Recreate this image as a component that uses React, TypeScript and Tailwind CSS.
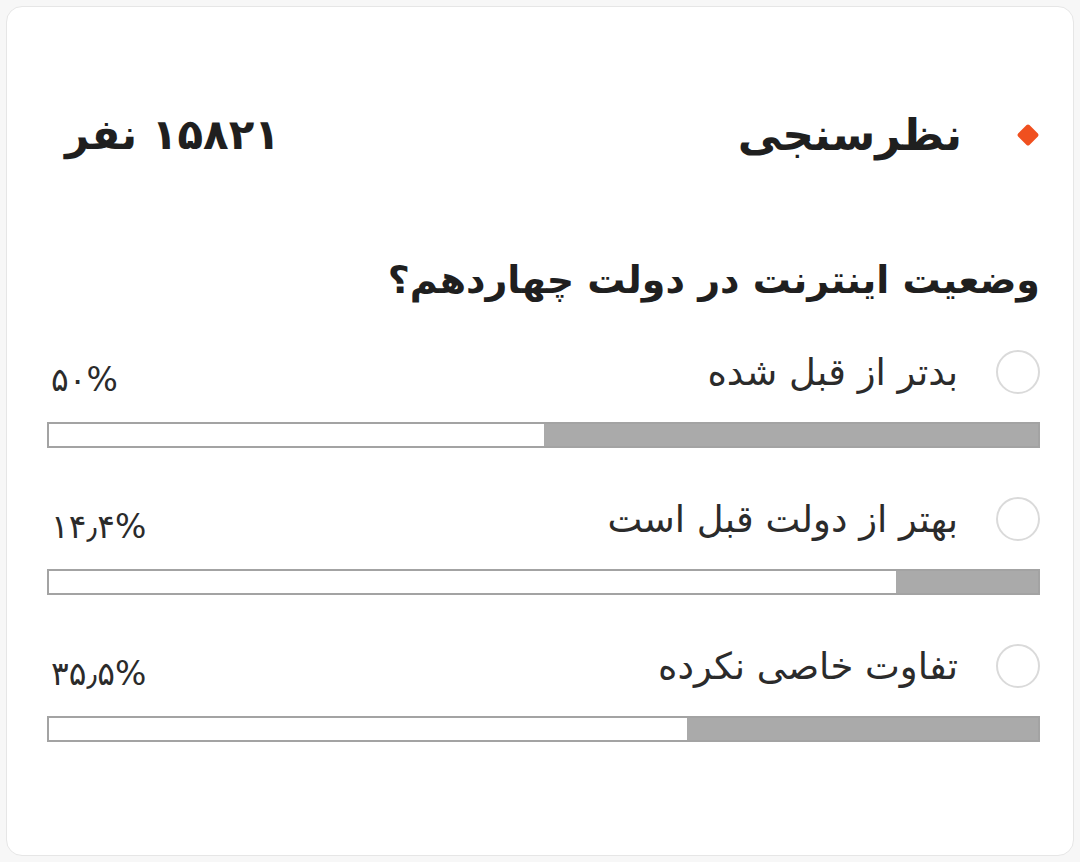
import React from "react";

const options = [
  { label: "بدتر از قبل شده", percent: "۵۰%", value: 50 },
  { label: "بهتر از دولت قبل است", percent: "۱۴٫۴%", value: 14.4 },
  { label: "تفاوت خاصی نکرده", percent: "۳۵٫۵%", value: 35.5 },
];

export default function App() {
  return (
    <div
      className="w-[1080px] h-[862px] bg-[#f7f7f7] p-[6px]"
      style={{ fontFamily: '"DejaVu Sans", "Noto Sans", sans-serif' }}
    >
      <div
        dir="rtl"
        className="h-[850px] bg-white border border-[#e6e6e6] rounded-[16px] pr-[33px] pl-[40px] pt-[98px]"
      >
        <div className="flex items-center justify-between h-[60px]">
          <div className="flex items-center gap-[58px]">
            <span className="w-[16px] h-[16px] rotate-45 bg-[#f0501f] rounded-[2px] mr-[4px]"></span>
            <h2 className="text-[44px] font-bold text-[#1f1f1f] leading-none">نظرسنجی</h2>
          </div>
          <div className="text-[42px] font-bold text-[#1f1f1f] leading-none ml-[18px]">
            ۱۵۸۲۱ نفر
          </div>
        </div>

        <div className="mt-[90px] h-[50px] flex items-center text-[38px] font-bold text-[#1f1f1f] leading-none">
          وضعیت اینترنت در دولت چهاردهم؟
        </div>

        <div className="mt-[42px] flex flex-col gap-[46px]">
          {options.map((o) => (
            <div key={o.label}>
              <div className="flex items-center justify-between h-[50px]">
                <div className="flex items-center gap-[38px]">
                  <span className="w-[44px] h-[44px] shrink-0 rounded-full border-2 border-[#dadada] bg-white"></span>
                  <span className="text-[37px] text-[#2b2b2b] leading-none">{o.label}</span>
                </div>
                <span dir="ltr" className="text-[33px] text-[#2b2b2b] leading-none mt-[14px] ml-[4px]">
                  {o.percent}
                </span>
              </div>
              <div className="mt-[25px] h-[26px] border-2 border-[#a3a3a3] bg-white flex">
                <div className="h-full bg-[#aaaaaa]" style={{ width: `${o.value}%` }}></div>
              </div>
            </div>
          ))}
        </div>
      </div>
    </div>
  );
}
